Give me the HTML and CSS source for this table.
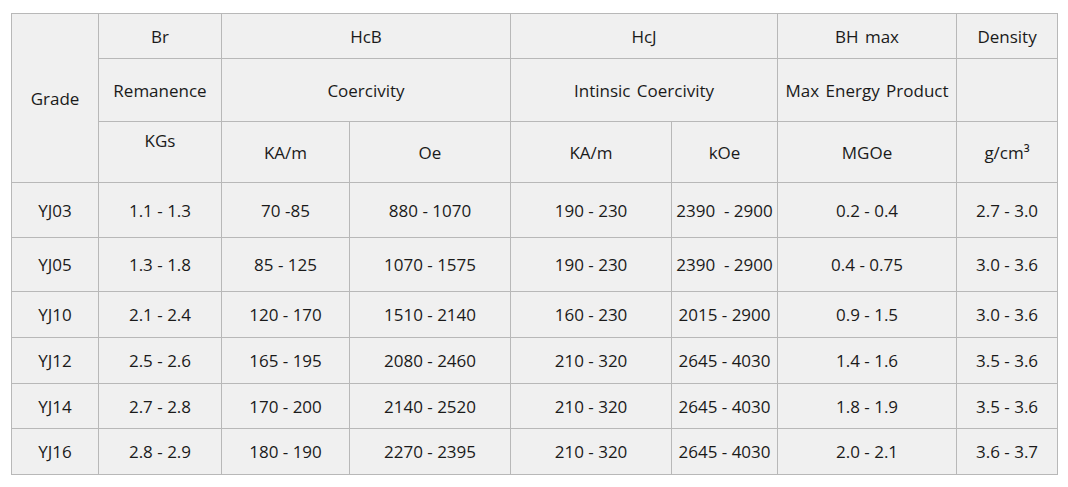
FILE: index.html
```html
<!doctype html>
<html lang="en">
<head>
    <meta charset="UTF-8">
    <title>Ferrite Grades</title>
    <link rel="stylesheet" href="styles.css">
</head>
<body>
    <table class="grades">
        <colgroup>
            <col class="c-grade">
            <col class="c-br">
            <col class="c-hcb1">
            <col class="c-hcb2">
            <col class="c-hcj1">
            <col class="c-hcj2">
            <col class="c-bh">
            <col class="c-den">
        </colgroup>
        <thead>
            <tr class="h1">
                <th rowspan="3">Grade</th>
                <th>Br</th>
                <th colspan="2">HcB</th>
                <th colspan="2">HcJ</th>
                <th>BH max</th>
                <th>Density</th>
            </tr>
            <tr class="h2">
                <th>Remanence</th>
                <th colspan="2">Coercivity</th>
                <th colspan="2">Intinsic Coercivity</th>
                <th>Max Energy Product</th>
                <th></th>
            </tr>
            <tr class="h3">
                <th class="top">KGs</th>
                <th>KA/m</th>
                <th>Oe</th>
                <th>KA/m</th>
                <th>kOe</th>
                <th>MGOe</th>
                <th>g/cm³</th>
            </tr>
        </thead>
        <tbody>
            <tr class="r1">
                <td>YJ03</td><td>1.1 - 1.3</td><td>70 -85</td><td>880 - 1070</td>
                <td>190 - 230</td><td>2390&nbsp; - 2900</td><td>0.2 - 0.4</td><td>2.7 - 3.0</td>
            </tr>
            <tr class="r2">
                <td>YJ05</td><td>1.3 - 1.8</td><td>85 - 125</td><td>1070 - 1575</td>
                <td>190 - 230</td><td>2390&nbsp; - 2900</td><td>0.4 - 0.75</td><td>3.0 - 3.6</td>
            </tr>
            <tr>
                <td>YJ10</td><td>2.1 - 2.4</td><td>120 - 170</td><td>1510 - 2140</td>
                <td>160 - 230</td><td>2015 - 2900</td><td>0.9 - 1.5</td><td>3.0 - 3.6</td>
            </tr>
            <tr>
                <td>YJ12</td><td>2.5 - 2.6</td><td>165 - 195</td><td>2080 - 2460</td>
                <td>210 - 320</td><td>2645 - 4030</td><td>1.4 - 1.6</td><td>3.5 - 3.6</td>
            </tr>
            <tr class="r5">
                <td>YJ14</td><td>2.7 - 2.8</td><td>170 - 200</td><td>2140 - 2520</td>
                <td>210 - 320</td><td>2645 - 4030</td><td>1.8 - 1.9</td><td>3.5 - 3.6</td>
            </tr>
            <tr>
                <td>YJ16</td><td>2.8 - 2.9</td><td>180 - 190</td><td>2270 - 2395</td>
                <td>210 - 320</td><td>2645 - 4030</td><td>2.0 - 2.1</td><td>3.6 - 3.7</td>
            </tr>
        </tbody>
    </table>
</body>
</html>
```
FILE: styles.css
```css
*{
    padding: 0;
    margin: 0;
    box-sizing: border-box;
}
body{
    background: #fff;
    font-family: "Open Sans", "Noto Sans", sans-serif;
    font-size: 17px;
    color: #1a1a1a;
}
.grades{
    margin: 13px 0 0 11px;
    width: 1046px;
    table-layout: fixed;
    border-collapse: collapse;
    background: #f0f0f0;
}
.grades th,
.grades td{
    border: 1px solid #b8b8b8;
    text-align: center;
    vertical-align: middle;
    font-weight: 400;
    white-space: nowrap;
    padding: 0;
}
.grades thead th{
    word-spacing: 2px;
}
.grades th.top{
    vertical-align: top;
    padding-top: 7px;
}

.c-grade{ width: 87px; }
.c-br{ width: 123px; }
.c-hcb1{ width: 128px; }
.c-hcb2{ width: 161px; }
.c-hcj1{ width: 161px; }
.c-hcj2{ width: 106px; }
.c-bh{ width: 179px; }
.c-den{ width: 101px; }

.h1{ height: 45px; }
.h2{ height: 63px; }
.h3{ height: 61px; }
.grades tbody tr{ height: 46px; }
.grades tbody tr.r1{ height: 55px; }
.grades tbody tr.r2{ height: 54px; }
.grades tbody tr.r5{ height: 45px; }
```
